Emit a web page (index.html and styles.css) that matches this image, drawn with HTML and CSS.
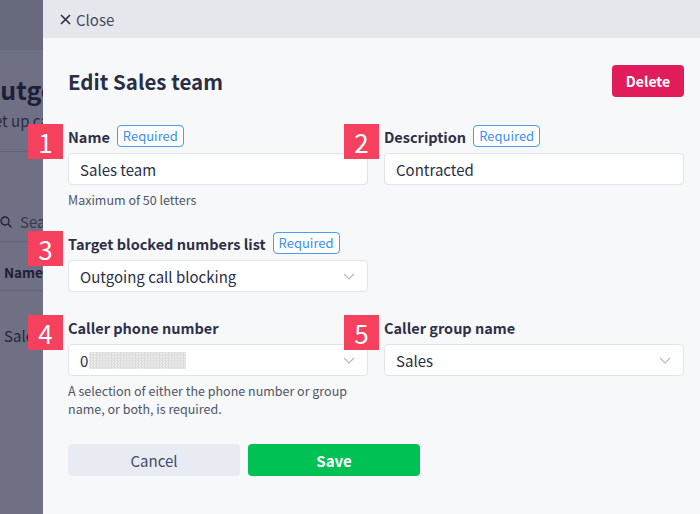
FILE: index.html
```html
<!DOCTYPE html>
<html lang="en">
<head>
    <meta charset="UTF-8">
    <meta name="viewport" content="width=device-width, initial-scale=1.0">
    <title>Edit Sales team</title>
    <link rel="stylesheet" href="styles.css">
</head>
<body>
    <!-- page behind the drawer -->
    <div class="page">
        <div class="page-header"></div>
        <div class="page-main">
            <h1 class="page-title">Outgoing call blocking</h1>
            <p class="page-sub">Set up call blocking lists</p>
            <div class="page-search">
                <svg width="12" height="12" viewBox="0 0 12 12"><circle cx="5" cy="5" r="4" fill="none" stroke="#2b2f45" stroke-width="1.3"/><line x1="8" y1="8" x2="11.5" y2="11.5" stroke="#2b2f45" stroke-width="1.3"/></svg>
                <span>Search</span>
            </div>
            <div class="page-th">Name</div>
            <div class="page-td">Sales team</div>
        </div>
    </div>
    <div class="overlay"></div>

    <div class="drawer">
        <div class="drawer-top">
            <button class="close-btn" type="button">
                <svg width="11" height="11" viewBox="0 0 11 11"><path d="M1 1 L10 10 M10 1 L1 10" stroke="#2b2f45" stroke-width="1.6" fill="none"/></svg>
                Close
            </button>
        </div>
        <div class="drawer-body">
            <div class="title-row">
                <h2>Edit Sales team</h2>
                <button class="btn-delete" type="button">Delete</button>
            </div>

            <div class="form-grid">
                <div class="field">
                    <span class="num">1</span>
                    <div class="label-row"><label for="name">Name</label><span class="req">Required</span></div>
                    <input class="text-input" type="text" id="name" value="Sales team">
                    <div class="hint">Maximum of 50 letters</div>
                </div>
                <div class="field">
                    <span class="num">2</span>
                    <div class="label-row"><label for="desc">Description</label><span class="req">Required</span></div>
                    <input class="text-input" type="text" id="desc" value="Contracted">
                </div>

                <div class="field">
                    <span class="num">3</span>
                    <div class="label-row"><label>Target blocked numbers list</label><span class="req">Required</span></div>
                    <div class="select">
                        <span>Outgoing call blocking</span>
                        <svg class="chev" width="12" height="7" viewBox="0 0 12 7"><polyline points="1,1 6,6 11,1" fill="none" stroke="#b4b8c1" stroke-width="1.1"/></svg>
                    </div>
                </div>
                <div class="field"></div>

                <div class="field">
                    <span class="num">4</span>
                    <div class="label-row"><label>Caller phone number</label></div>
                    <div class="select">
                        <span>0<span class="masked"></span></span>
                        <svg class="chev" width="12" height="7" viewBox="0 0 12 7"><polyline points="1,1 6,6 11,1" fill="none" stroke="#b4b8c1" stroke-width="1.1"/></svg>
                    </div>
                    <div class="hint hint-long">A selection of either the phone number or group name, or both, is required.</div>
                </div>
                <div class="field">
                    <span class="num">5</span>
                    <div class="label-row"><label>Caller group name</label></div>
                    <div class="select">
                        <span>Sales</span>
                        <svg class="chev" width="12" height="7" viewBox="0 0 12 7"><polyline points="1,1 6,6 11,1" fill="none" stroke="#b4b8c1" stroke-width="1.1"/></svg>
                    </div>
                </div>
            </div>

            <div class="actions">
                <button class="btn-cancel" type="button">Cancel</button>
                <button class="btn-save" type="button">Save</button>
            </div>
        </div>
    </div>
</body>
</html>
```

FILE: styles.css
```css
* {
    box-sizing: border-box;
}
body {
    margin: 0;
    width: 700px;
    height: 514px;
    overflow: hidden;
    font-family: "Noto Sans CJK JP", "Noto Sans", sans-serif;
    color: #2b2f45;
    background-color: #f7f8fa;
    position: relative;
}
button {
    font-family: inherit;
    cursor: pointer;
}

/* page under the overlay */
.page {
    height: 514px;
}
.page-header {
    height: 50px;
    background-color: #e4e6ec;
}
.page-title {
    margin: 23px 0 0 -19px;
    font-size: 25px;
    line-height: 32px;
    font-weight: 700;
    white-space: nowrap;
}
.page-sub {
    margin: 6px 0 0 -15px;
    font-size: 15px;
    line-height: 20px;
    color: #4a4e60;
    padding-bottom: 20px;
    white-space: nowrap;
}
.page-search {
    display: flex;
    align-items: center;
    gap: 8px;
    height: 91px;
    padding-top: 50px;
    border-top: 1px solid #d9dce3;
    border-bottom: 1px solid #d9dce3;
    font-size: 15px;
    color: #6c7080;
}
.page-th {
    margin-top: 11px;
    padding-left: 4px;
    height: 38px;
    line-height: 38px;
    font-size: 13.5px;
    font-weight: 700;
    border-bottom: 1px solid #d9dce3;
}
.page-td {
    padding-left: 4px;
    height: 90px;
    line-height: 90px;
    font-size: 15px;
    color: #3a3e52;
    white-space: nowrap;
}
.overlay {
    position: absolute;
    inset: 0;
    background-color: rgba(20, 22, 52, 0.6);
}

/* drawer */
.drawer {
    position: absolute;
    top: 0;
    left: 43px;
    right: 0;
    bottom: 0;
    background-color: #f7f8fa;
}
.drawer-top {
    height: 38px;
    background-color: #e5e7ec;
    padding-left: 17px;
    display: flex;
    align-items: center;
}
.close-btn {
    display: flex;
    align-items: center;
    gap: 5px;
    border: none;
    background: none;
    padding: 0;
    font-size: 15px;
    color: #444a5e;
}
.drawer-body {
    padding: 27px 16px 0 25px;
}
.title-row {
    display: flex;
    justify-content: space-between;
    align-items: center;
    height: 32px;
}
.title-row h2 {
    margin: 0;
    font-size: 20.5px;
    font-weight: 700;
    color: #2a2e45;
}
.btn-delete {
    width: 72px;
    height: 32px;
    border: none;
    border-radius: 4px;
    background-color: #e01c5a;
    color: #ffffff;
    font-size: 14px;
    font-weight: 700;
}

.form-grid {
    margin-top: 28px;
    display: grid;
    grid-template-columns: 1fr 1fr;
    column-gap: 16px;
    row-gap: 24px;
}
.field {
    position: relative;
}
.num {
    position: absolute;
    left: -40px;
    top: -1px;
    width: 35px;
    height: 35px;
    background-color: #f5405e;
    color: #ffffff;
    font-size: 26px;
    line-height: 35px;
    text-align: center;
}
.label-row {
    display: flex;
    align-items: center;
    gap: 7px;
    height: 22px;
}
.label-row label {
    font-size: 14.5px;
    font-weight: 700;
    color: #2d3047;
}
.req {
    height: 22px;
    padding: 0 5px;
    border: 1px solid #4a9cf5;
    border-radius: 4px;
    color: #3d8ff0;
    font-size: 13px;
    line-height: 20px;
    background-color: #ffffff;
}
.text-input,
.select {
    display: flex;
    align-items: center;
    justify-content: space-between;
    width: 100%;
    height: 32px;
    margin-top: 6px;
    padding: 0 12px 0 11px;
    border: 1px solid #e1e4ea;
    border-radius: 4px;
    background-color: #ffffff;
    font-family: inherit;
    font-size: 15px;
    color: #2b2f45;
}
.select > span {
    display: flex;
    align-items: center;
}
.masked {
    display: inline-block;
    width: 97px;
    height: 17px;
    margin-left: 1px;
    background: repeating-conic-gradient(#dcdcdc 0 25%, #ebebeb 0 50%) 0 0 / 3px 3px;
}
.hint {
    margin-top: 7px;
    font-size: 12.5px;
    line-height: 16px;
    color: #505565;
}
.hint-long {
    margin-top: 6px;
    line-height: 18px;
}

.actions {
    display: flex;
    gap: 8px;
    margin-top: 26px;
}
.actions button {
    width: 172px;
    height: 32px;
    border: none;
    border-radius: 4px;
    font-size: 15px;
}
.btn-cancel {
    background-color: #e8ecf2;
    color: #3f4a6a;
}
.btn-save {
    background-color: #00c153;
    color: #ffffff;
    font-weight: 700;
}
```
